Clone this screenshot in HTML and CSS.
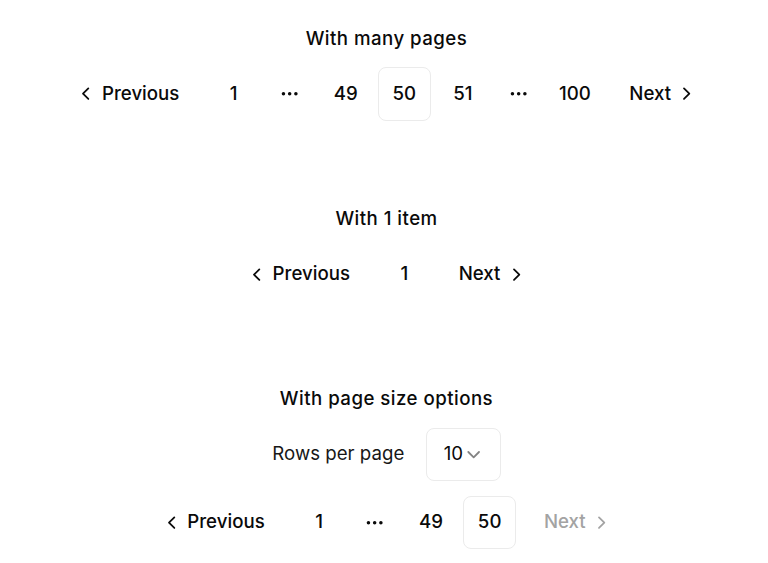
FILE: index.html
```html
<!DOCTYPE html>
<html lang="en">
<head>
<meta charset="utf-8">
<title>Pagination</title>
<link rel="stylesheet" href="styles.css">
</head>
<body>
<main class="page">
  <section class="demo">
    <h2 class="demo-title">With many pages</h2>
    <nav class="pagination" aria-label="pagination">
      <ul class="pagination-list">
        <li><a class="page-link page-prev" href="#"><svg class="icon" viewBox="0 0 24 24"><path d="m15 18-6-6 6-6"/></svg><span>Previous</span></a></li>
        <li><a class="page-link page-num" href="#">1</a></li>
        <li><span class="ellipsis"><svg class="icon" viewBox="0 0 24 24"><circle cx="12" cy="12" r="1"/><circle cx="19" cy="12" r="1"/><circle cx="5" cy="12" r="1"/></svg></span></li>
        <li><a class="page-link page-num" href="#">49</a></li>
        <li><a class="page-link page-num is-active" href="#">50</a></li>
        <li><a class="page-link page-num" href="#">51</a></li>
        <li><span class="ellipsis"><svg class="icon" viewBox="0 0 24 24"><circle cx="12" cy="12" r="1"/><circle cx="19" cy="12" r="1"/><circle cx="5" cy="12" r="1"/></svg></span></li>
        <li><a class="page-link page-num" href="#">100</a></li>
        <li><a class="page-link page-next" href="#"><span>Next</span><svg class="icon" viewBox="0 0 24 24"><path d="m9 18 6-6-6-6"/></svg></a></li>
      </ul>
    </nav>
  </section>

  <section class="demo">
    <h2 class="demo-title">With 1 item</h2>
    <nav class="pagination" aria-label="pagination">
      <ul class="pagination-list">
        <li><a class="page-link page-prev" href="#"><svg class="icon" viewBox="0 0 24 24"><path d="m15 18-6-6 6-6"/></svg><span>Previous</span></a></li>
        <li><a class="page-link page-num" href="#">1</a></li>
        <li><a class="page-link page-next" href="#"><span>Next</span><svg class="icon" viewBox="0 0 24 24"><path d="m9 18 6-6-6-6"/></svg></a></li>
      </ul>
    </nav>
  </section>

  <section class="demo">
    <h2 class="demo-title">With page size options</h2>
    <div class="page-size">
      <span class="page-size-label">Rows per page</span>
      <button class="select-trigger" type="button"><span>10</span><svg class="icon icon-muted" viewBox="0 0 24 24"><path d="m6 9 6 6 6-6"/></svg></button>
    </div>
    <nav class="pagination" aria-label="pagination">
      <ul class="pagination-list">
        <li><a class="page-link page-prev" href="#"><svg class="icon" viewBox="0 0 24 24"><path d="m15 18-6-6 6-6"/></svg><span>Previous</span></a></li>
        <li><a class="page-link page-num" href="#">1</a></li>
        <li><span class="ellipsis"><svg class="icon" viewBox="0 0 24 24"><circle cx="12" cy="12" r="1"/><circle cx="19" cy="12" r="1"/><circle cx="5" cy="12" r="1"/></svg></span></li>
        <li><a class="page-link page-num" href="#">49</a></li>
        <li><a class="page-link page-num is-active" href="#">50</a></li>
        <li><a class="page-link page-next is-disabled" href="#"><span>Next</span><svg class="icon" viewBox="0 0 24 24"><path d="m9 18 6-6-6-6"/></svg></a></li>
      </ul>
    </nav>
  </section>
</main>
</body>
</html>
```
FILE: styles.css
```css
html {
  font-size: 21.3333px;
}

* {
  box-sizing: border-box;
}

body {
  margin: 0;
  background: #ffffff;
  color: #0a0a0a;
  font-family: "Inter", "Noto Sans", sans-serif;
}

.page {
  display: flex;
  flex-direction: column;
  align-items: center;
  gap: 4rem;
  padding: 25.7px 0 0 5px;
}

.demo {
  display: flex;
  flex-direction: column;
  align-items: center;
  gap: 0.7rem;
}

.demo-title {
  margin: 0;
  font-size: 0.875rem;
  line-height: 1.25rem;
  font-weight: 500;
  letter-spacing: 0.025em;
  color: #0a0a0a;
}

.pagination {
  display: flex;
  justify-content: center;
}

.pagination-list {
  display: flex;
  align-items: center;
  gap: 0.25rem;
  margin: 0;
  padding: 0;
  list-style: none;
}

.page-link {
  display: inline-flex;
  align-items: center;
  justify-content: center;
  height: 2.5rem;
  border: 1px solid transparent;
  border-radius: 0.375rem;
  font-size: 0.875rem;
  line-height: 1.25rem;
  font-weight: 500;
  color: #0a0a0a;
  text-decoration: none;
  white-space: nowrap;
}

.page-num {
  width: 2.5rem;
}

.page-prev {
  gap: 0.25rem;
  padding: 0 1rem 0 0.625rem;
}

.page-next {
  gap: 0.25rem;
  padding: 0 0.625rem 0 1rem;
}

.is-active {
  border-color: #ebebeb;
  background: #ffffff;
}

.is-disabled {
  color: #a3a3a3;
}

.ellipsis {
  display: flex;
  align-items: center;
  justify-content: center;
  width: 2.25rem;
  height: 2.25rem;
}

.icon {
  width: 1rem;
  height: 1rem;
  flex-shrink: 0;
  fill: none;
  stroke: currentColor;
  stroke-width: 2;
  stroke-linecap: round;
  stroke-linejoin: round;
}

.icon-muted {
  opacity: 0.5;
}

.page-size {
  display: flex;
  align-items: center;
  gap: 1rem;
}

.page-size-label {
  font-size: 0.875rem;
  line-height: 1.25rem;
  font-weight: 400;
  color: #171717;
}

.select-trigger {
  display: flex;
  align-items: center;
  justify-content: space-between;
  width: 75px;
  height: 2.5rem;
  padding: 0 0.75rem 0 0.8rem;
  border: 1px solid #ebebeb;
  border-radius: 0.375rem;
  background: #ffffff;
  font-family: inherit;
  font-size: 0.875rem;
  line-height: 1.25rem;
  color: #0a0a0a;
}
```
